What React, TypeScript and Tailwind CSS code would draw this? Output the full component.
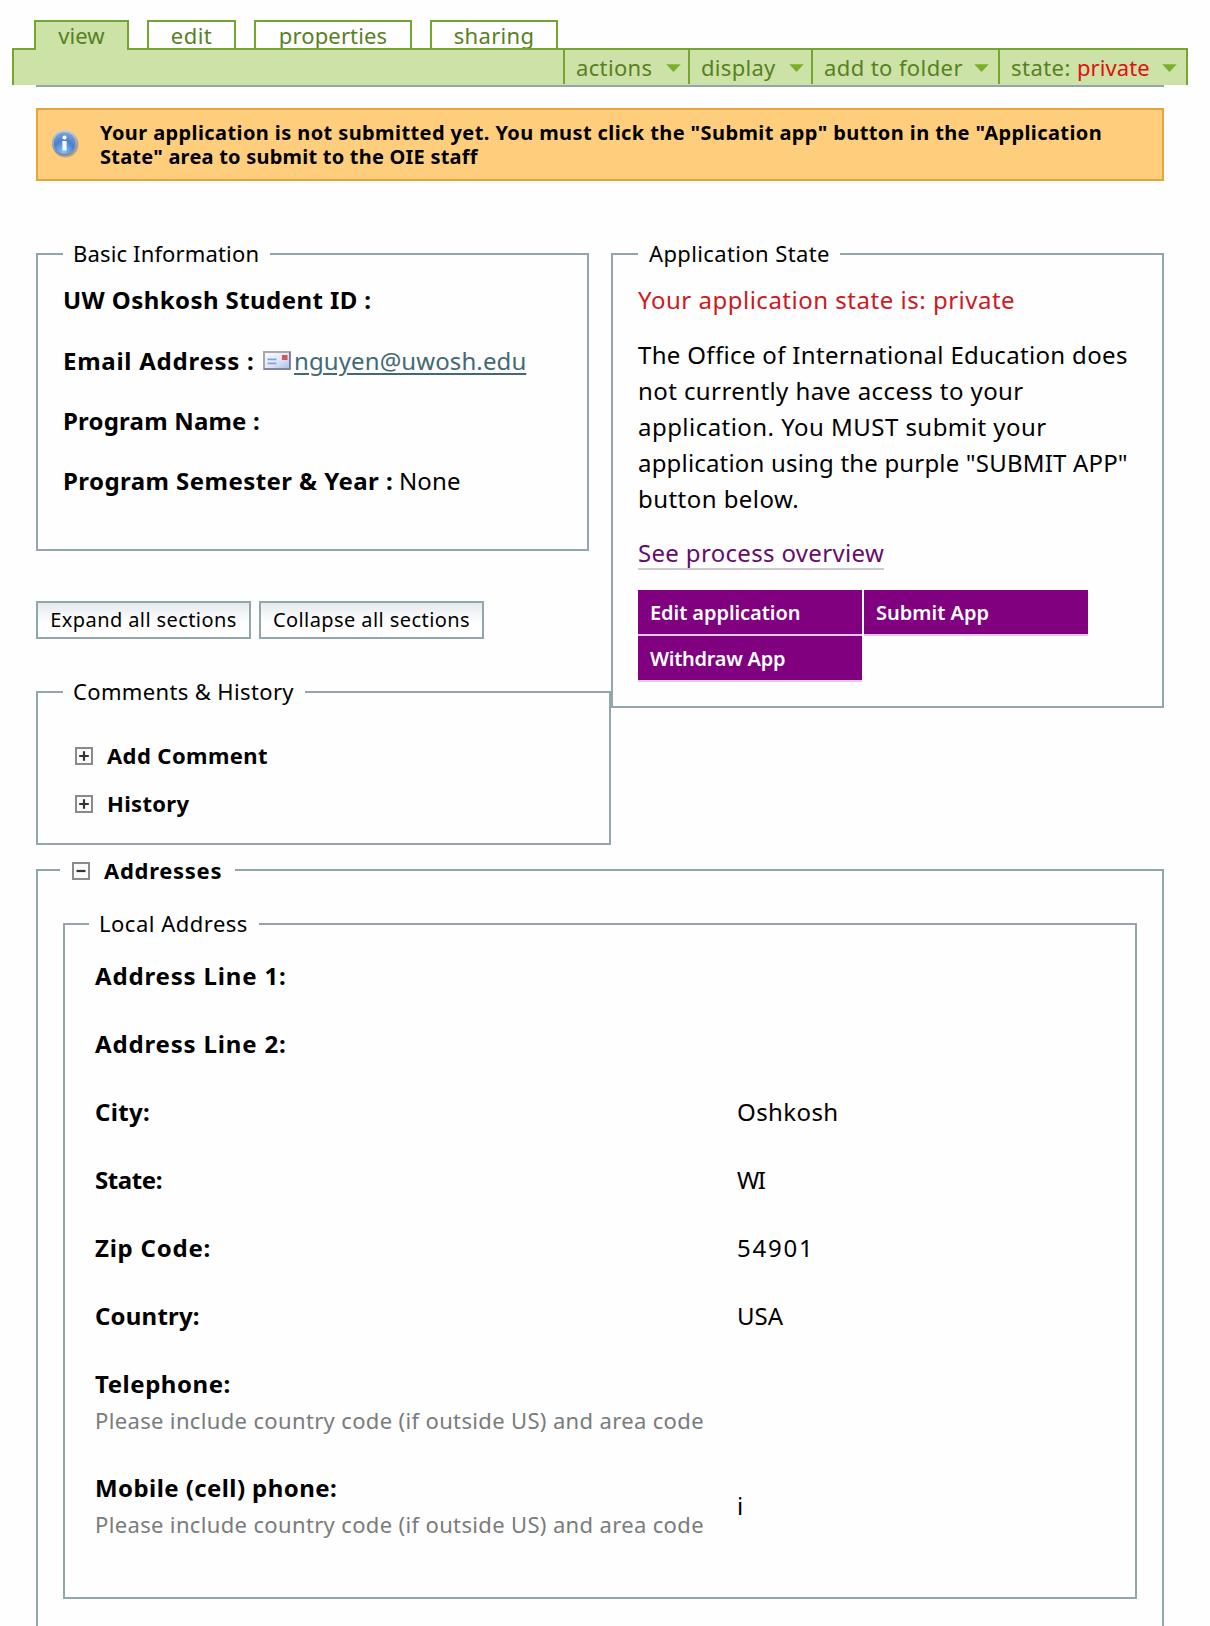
import type { ReactNode } from "react";

const tabs = [
  { label: "view", cls: "w-[95px] h-[30px] -mb-[2px] relative z-10 bg-[#cde2a7]", track: "tracking-[0.06px]" },
  { label: "edit", cls: "w-[89px] h-7", track: "tracking-[0.5px]" },
  { label: "properties", cls: "w-[158px] h-7", track: "tracking-[0.15px]" },
  { label: "sharing", cls: "w-[128px] h-7", track: "tracking-[0.3px]" },
];

const addressRows = [
  { label: "Address Line 1:", track: "tracking-[0.83px]" },
  { label: "Address Line 2:", track: "tracking-[0.83px]" },
  { label: "City:", track: "tracking-[0.3px]" , value: "Oshkosh", valueTrack: "tracking-[0.4px]" },
  { label: "State:", track: "tracking-[-0.4px]", value: "WI", valueTrack: "tracking-[-1.5px]" },
  { label: "Zip Code:", track: "tracking-[0.76px]", value: "54901", valueTrack: "tracking-[1.8px]" },
  { label: "Country:", track: "tracking-[0.2px]", value: "USA", valueTrack: "tracking-[0px]" },
  { label: "Telephone:", track: "tracking-[0.54px]", help: true },
  { label: "Mobile (cell) phone:", track: "tracking-[0.42px]", help: true, value: "i" },
];

function Menu({ children, className }: { children: ReactNode; className: string }) {
  return (
    <div className={`flex h-[34px] items-center justify-between border-l-2 border-[#74a52e] pl-[11px] ${className}`}>
      <span className="whitespace-nowrap">{children}</span>
      <svg width="15" height="8" viewBox="0 0 15 8" className="mt-[2px] shrink-0">
        <path d="M0.3 0.2h14.4L7.5 8z" fill="#78b02a" />
      </svg>
    </div>
  );
}

function Panel({ legend, legendClass, className, children }: { legend: ReactNode; legendClass: string; className: string; children: ReactNode }) {
  return (
    <fieldset className={`border-2 border-[#92a7ac] ${className}`}>
      <legend className={`h-[30px] whitespace-nowrap text-[22px] leading-[28px] ${legendClass}`}>{legend}</legend>
      {children}
    </fieldset>
  );
}

function Toggle({ open = false }: { open?: boolean }) {
  return (
    <svg width="18" height="18" viewBox="0 0 18 18" className="mt-px shrink-0">
      <rect x="1" y="1" width="16" height="16" fill="#fafafa" stroke="#8a8a8a" strokeWidth="2" />
      <path d={open ? "M4.5 9h9" : "M4.2 9h9.6M9 4.2v9.6"} stroke="#333" strokeWidth="2.2" />
    </svg>
  );
}

function InfoIcon() {
  return (
    <svg width="28" height="29" viewBox="0 0 28 29" className="shrink-0">
      <defs>
        <linearGradient id="infoRim" x1="0" y1="0" x2="0" y2="1">
          <stop offset="0" stopColor="#c3cddb" />
          <stop offset="1" stopColor="#6f87a8" />
        </linearGradient>
        <radialGradient id="infoBall" cx="0.45" cy="0.9" r="0.9">
          <stop offset="0" stopColor="#8fc1f0" />
          <stop offset="0.55" stopColor="#4a7fcb" />
          <stop offset="1" stopColor="#7da5dc" />
        </radialGradient>
      </defs>
      <ellipse cx="14.5" cy="15.5" rx="13" ry="13" fill="#8a8373" opacity="0.55" />
      <circle cx="13.7" cy="14" r="12.8" fill="url(#infoRim)" />
      <circle cx="13.7" cy="14" r="10.8" fill="url(#infoBall)" />
      <circle cx="13.5" cy="8.6" r="2.1" fill="#fff" />
      <path d="M11.2 12h4.4v9.5h-4z" fill="#f4f8fd" />
    </svg>
  );
}

function MailIcon() {
  return (
    <svg width="28" height="19" viewBox="0 0 28 19" className="shrink-0">
      <defs>
        <linearGradient id="mail" x1="0" y1="0" x2="1" y2="1">
          <stop offset="0" stopColor="#fbfbff" />
          <stop offset="0.5" stopColor="#e2e8f8" />
          <stop offset="1" stopColor="#a9bde8" />
        </linearGradient>
      </defs>
      <rect x="1" y="1" width="26" height="17" fill="url(#mail)" stroke="#aaa7a6" strokeWidth="2" />
      <path d="M26.8 1v17H1" fill="none" stroke="#737c99" strokeWidth="1.6" />
      <path d="M4.5 8.3h9M4.5 12.3h9" stroke="#7fa3dc" strokeWidth="1.7" />
      <rect x="19" y="4" width="5.5" height="5" fill="#cf5860" />
    </svg>
  );
}

export default function App() {
  return (
    <div className="flex h-[1626px] w-[1210px] flex-col overflow-hidden bg-[#fefefe] pt-5 font-['Noto_Sans',sans-serif] text-black">
      <nav className="ml-[34px] flex h-7 items-start gap-[18px] text-[22px] leading-[26px] text-[#578022]">
        {tabs.map((t) => (
          <a key={t.label} className={`shrink-0 border-2 border-b-0 border-[#74a52e] text-center ${t.cls} ${t.track}`}>
            {t.label}
          </a>
        ))}
      </nav>
      <div className="relative ml-3 flex h-[37px] w-[1176px] shrink-0 justify-end border-2 border-b-0 border-[#74a52e] bg-[#cde2a7] text-[22px] leading-[34px] text-[#578022]">
        <Menu className="w-[125px] pr-[7px] tracking-[0.35px]">actions</Menu>
        <Menu className="w-[123px] pr-[7px] tracking-[0.3px]">display</Menu>
        <Menu className="w-[187px] pr-[9px] tracking-[0.4px]">add to folder</Menu>
        <Menu className="w-[188px] pr-[9px] tracking-[0.45px]">
          state: <span className="tracking-[0.1px] text-[#e01010]">private</span>
        </Menu>
      </div>

      <main className="ml-9 w-[1128px] border-t-2 border-[#92a7ac]">
        <div className="mt-[21px] flex h-[73px] border-2 border-[#e3a63f] bg-[#ffce7c]">
          <div className="w-[62px] pl-[13px] pt-[19px]">
            <InfoIcon />
          </div>
          <p className="whitespace-nowrap pt-[11px] text-xl font-bold leading-6">
            <span className="tracking-[0.4px]">Your application is not submitted yet. You must click the "Submit app" button in the "Application</span>
            <br />
            <span className="tracking-[0.22px]">State" area to submit to the OIE staff</span>
          </p>
        </div>

        <div className="mt-[58px] flex items-start">
          <div className="flex w-[575px] flex-col">
            <Panel legend="Basic Information" legendClass="ml-[25px] w-[207px] px-[10px] tracking-[0.15px]" className="h-[312px] w-[553px]">
              <div className="whitespace-nowrap pl-[25px] pt-[13px] text-2xl leading-9">
                <p className="mb-[25px] font-bold tracking-[0.42px]">UW Oshkosh Student ID :</p>
                <p className="mb-6 flex h-9">
                  <b className="w-[200px] tracking-[0.74px]">Email Address :</b>
                  <span className="mr-[3px] pt-2"><MailIcon /></span>
                  <a className="tracking-[0.1px] text-[#436976] underline decoration-2 underline-offset-[3px]">nguyen@uwosh.edu</a>
                </p>
                <p className="mb-6 font-bold tracking-[0.2px]">Program Name :</p>
                <p className="flex">
                  <b className="w-[336px] tracking-[0.44px]">Program Semester &amp; Year :</b>
                  <span className="tracking-[0.1px]">None</span>
                </p>
              </div>
            </Panel>

            <div className="mt-[50px] flex gap-2 text-xl">
              <button className="h-[38px] w-[215px] whitespace-nowrap border-2 border-[#92a7ac] bg-linear-to-b from-[#e6eaee] to-white to-60% leading-[34px] tracking-[0.4px]">Expand all sections</button>
              <button className="h-[38px] w-[225px] whitespace-nowrap border-2 border-[#92a7ac] bg-linear-to-b from-[#e6eaee] to-white to-60% leading-[34px] tracking-[0.42px]">Collapse all sections</button>
            </div>

            <Panel legend="Comments & History" legendClass="ml-[25px] w-[242px] px-[10px] tracking-[0.36px]" className="mt-[38px] h-[168px] w-[575px]">
              <div className="flex flex-col gap-[18px] pl-[37px] pt-[33px] text-[22px] font-bold leading-[30px]">
                <div className="flex items-center gap-[14px] tracking-[0.4px]"><Toggle />Add Comment</div>
                <div className="flex items-center gap-[14px] tracking-[0.32px]"><Toggle />History</div>
              </div>
            </Panel>
          </div>

          <Panel legend="Application State" legendClass="ml-[25px] w-[202px] px-[11px] tracking-[0.38px]" className="h-[469px] w-[553px]">
            <div className="whitespace-nowrap pl-[25px] pt-[13px] text-2xl leading-9">
              <p className="tracking-[0.51px] text-[#cf1820]">Your application state is: private</p>
              <p className="mt-[19px]">
                <span className="tracking-[0.33px]">The Office of International Education does</span><br />
                <span className="tracking-[0.41px]">not currently have access to your</span><br />
                <span className="tracking-[0.46px]">application. You MUST submit your</span><br />
                <span className="tracking-[0.18px]">application using the purple "SUBMIT APP"</span><br />
                <span className="tracking-[0.45px]">button below.</span>
              </p>
              <a className="mt-5 block h-[33px] w-[246px] border-b-2 border-[#cbcbcb] leading-[31px] tracking-[0.33px] text-[#660c6c]">See process overview</a>
              <div className="mt-5 grid w-[450px] grid-cols-2 gap-[2px] text-xl font-semibold leading-[46px] text-white">
                <a className="h-[44px] bg-[#800080] pl-3 tracking-[-0.06px] shadow-[0_2px_0_#e3c8e6]">Edit application</a>
                <a className="h-[44px] bg-[#800080] pl-3 shadow-[0_2px_0_#e3c8e6]">Submit App</a>
                <a className="h-[44px] bg-[#800080] pl-3 tracking-[-0.26px] shadow-[0_2px_0_#e3c8e6]">Withdraw App</a>
              </div>
            </div>
          </Panel>
        </div>

        <Panel
          legend={<span className="flex h-[30px] items-center gap-[14px] font-bold tracking-[0.71px]"><Toggle open />Addresses</span>}
          legendClass="-ml-[3px] w-[175px] pl-3"
          className="mt-[10px] h-[800px] px-[25px]"
        >
          <Panel legend="Local Address" legendClass="ml-6 w-[170px] px-[10px] tracking-[0.5px]" className="mt-6 h-[690px]">
            <div className="flex flex-col gap-8 pl-[30px] pt-[19px] text-2xl leading-9">
              {addressRows.map((row) => (
                <div key={row.label} className="flex items-center whitespace-nowrap">
                  <div className="w-[642px] shrink-0">
                    <b className={`block ${row.track}`}>{row.label}</b>
                    {row.help && (
                      <span className="block text-[22px] tracking-[0.35px] text-[#7a7c7c]">Please include country code (if outside US) and area code</span>
                    )}
                  </div>
                  <span className={row.valueTrack}>{row.value}</span>
                </div>
              ))}
            </div>
          </Panel>
        </Panel>
      </main>
    </div>
  );
}
